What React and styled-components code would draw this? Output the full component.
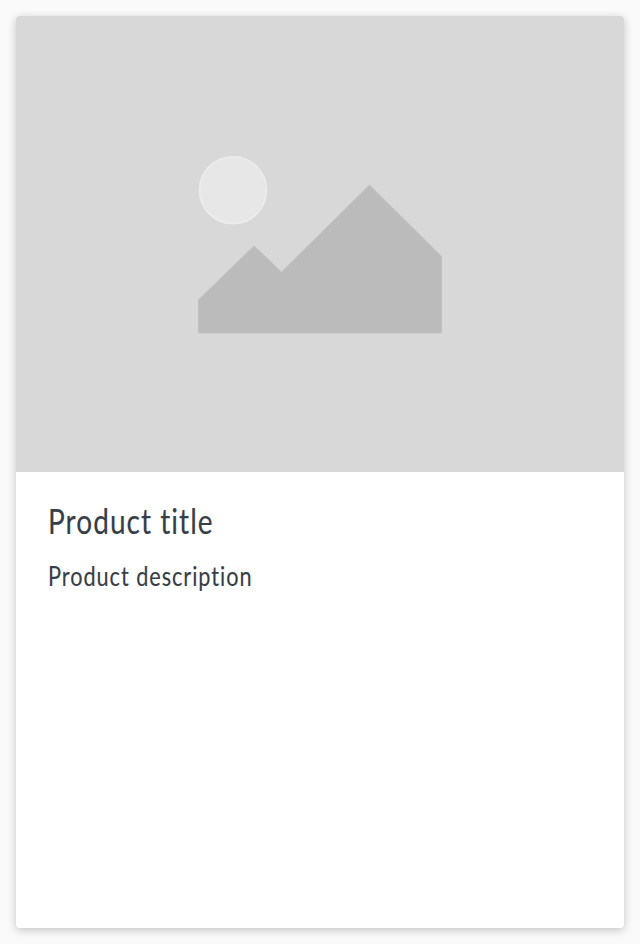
import React from "react";
import styled, { createGlobalStyle } from "styled-components";

const GlobalStyle = createGlobalStyle`
  * { box-sizing: border-box; }
  body { margin: 0; background: #fafafa; }
`;

const Page = styled.main`
  display: flex;
  height: 944px;
  padding: 16px;
`;

const Card = styled.article`
  display: flex;
  flex-direction: column;
  flex: 1;
  overflow: hidden;
  border-radius: 4px;
  background: #fff;
  box-shadow: 0 2px 8px rgba(0, 0, 0, 0.2), 0 4px 16px rgba(0, 0, 0, 0.03);
`;

const Media = styled.div`
  height: 456px;
  background: #d8d8d8;
`;

const Placeholder = styled.svg`
  display: block;
  width: 100%;
  height: 100%;
`;

const Content = styled.div`
  display: flex;
  flex-direction: column;
  align-items: flex-start;
  padding: 28px 32px;
  color: #363e47;
  font-family: Lato, "Open Sans", sans-serif;
  -webkit-text-stroke: 0.15px #363e47;
`;

const Title = styled.h1`
  margin: 0;
  font-size: 35px;
  font-weight: 400;
  line-height: 40px;
  letter-spacing: 1.3px;
  white-space: nowrap;
  transform: scaleX(0.8);
  transform-origin: left;
`;

const Description = styled.p`
  margin: 20px 0 0;
  font-size: 27px;
  line-height: 32px;
  letter-spacing: 1.2px;
  white-space: nowrap;
  transform: scaleX(0.803);
  transform-origin: left;
`;

export default function App() {
  return (
    <>
      <GlobalStyle />
      <Page>
        <Card>
          <Media>
            <Placeholder viewBox="0 0 608 456" aria-hidden="true">
              <circle cx="217" cy="174.2" r="33.5" fill="#e7e7e7" stroke="#ededed" strokeWidth="1.6" />
              <path d="M182.5 283.8L238 229.8L265.5 256L353.5 169L425.5 240.5V317H182.5Z" fill="#bbbbbb" stroke="#c2c2c2" />
            </Placeholder>
          </Media>
          <Content>
            <Title>Product title</Title>
            <Description>Product description</Description>
          </Content>
        </Card>
      </Page>
    </>
  );
}
